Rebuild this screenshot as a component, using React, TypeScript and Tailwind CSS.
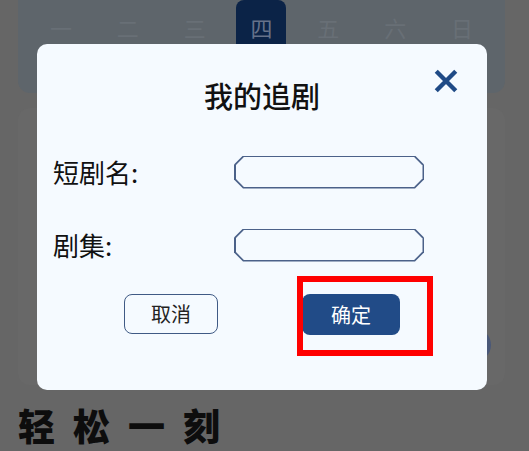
import React from 'react';

const days = ['一', '二', '三', '四', '五', '六', '日'];

const cjk = { fontFamily: '"Noto Sans CJK SC", "Noto Sans", sans-serif' };

function Field({ label }: { label: string }) {
  return (
    <div className="flex items-center h-[32px]">
      <span className="w-[181px] text-[26px] leading-none text-[#111]">{label}</span>
      <div className="w-[190px] h-[33px] p-[1.5px] bg-[#4b6189] [clip-path:polygon(9px_0,calc(100%-9px)_0,100%_9px,100%_calc(100%-9px),calc(100%-9px)_100%,9px_100%,0_calc(100%-9px),0_9px)]">
        <input className="w-full h-full bg-[#f5faff] outline-none px-3 text-[16px] [clip-path:polygon(8.4px_0,calc(100%-8.4px)_0,100%_8.4px,100%_calc(100%-8.4px),calc(100%-8.4px)_100%,8.4px_100%,0_calc(100%-8.4px),0_8.4px)]" />
      </div>
    </div>
  );
}

export default function App() {
  return (
    <div className="relative w-[529px] h-[451px] overflow-hidden bg-[#666666]" style={cjk}>
      {/* page behind the overlay */}
      <div className="ml-[18px] w-[487px] h-[93px] rounded-b-[12px] bg-[#5e656b] flex justify-between px-[18px]">
        {days.map((d) => (
          <div
            key={d}
            className={
              d === '四'
                ? 'w-[50px] h-[54px] rounded-[8px] bg-[#0b2347] text-[#66728a] flex items-center justify-center text-[22px]'
                : 'w-[50px] h-[54px] text-[#686f76] flex items-center justify-center text-[22px]'
            }
          >
            {d}
          </div>
        ))}
      </div>
      <div className="relative ml-[18px] w-[487px] mt-[15px] h-[277px] rounded-[12px] bg-[#686868]">
        <div className="absolute right-[14px] bottom-[23px] w-[40px] h-[34px] rounded-full bg-[#4a5878]" />
      </div>
      <div className="pl-[18px] mt-[22px] text-[37px] leading-none font-black tracking-[18px] text-[#0d0d0d]">
        轻松一刻
      </div>

      {/* dialog */}
      <div className="absolute left-[37px] top-[44px] w-[450px] h-[346px] rounded-[10px] bg-[#f5faff]">
        <div className="relative pt-[37px] text-center text-[29px] leading-none font-medium text-[#111]">
          我的追剧
          <button className="absolute right-[28px] top-[24px] w-[26px] h-[26px]">
            <svg viewBox="0 0 24 24" width="26" height="26">
              <path d="M3 3L21 21M21 3L3 21" stroke="#1f4a86" strokeWidth="4" />
            </svg>
          </button>
        </div>
        <div className="pl-[16px] mt-[46px] flex flex-col gap-[41px]">
          <Field label="短剧名:" />
          <Field label="剧集:" />
        </div>
        <div className="mt-[33px] flex pl-[87px] gap-[84px]">
          <button className="w-[94px] h-[40px] rounded-[8px] border-[1.5px] border-[#3f5a85] bg-[#f5faff] text-[20px] text-[#222]">
            取消
          </button>
          <button className="w-[98px] h-[41px] rounded-[8px] bg-[#214b87] text-[20px] text-white">
            确定
          </button>
        </div>
      </div>

      {/* highlight frame */}
      <div className="absolute left-[297px] top-[276px] w-[136px] h-[80px] border-[6px] border-[#ff0000]" />
    </div>
  );
}
